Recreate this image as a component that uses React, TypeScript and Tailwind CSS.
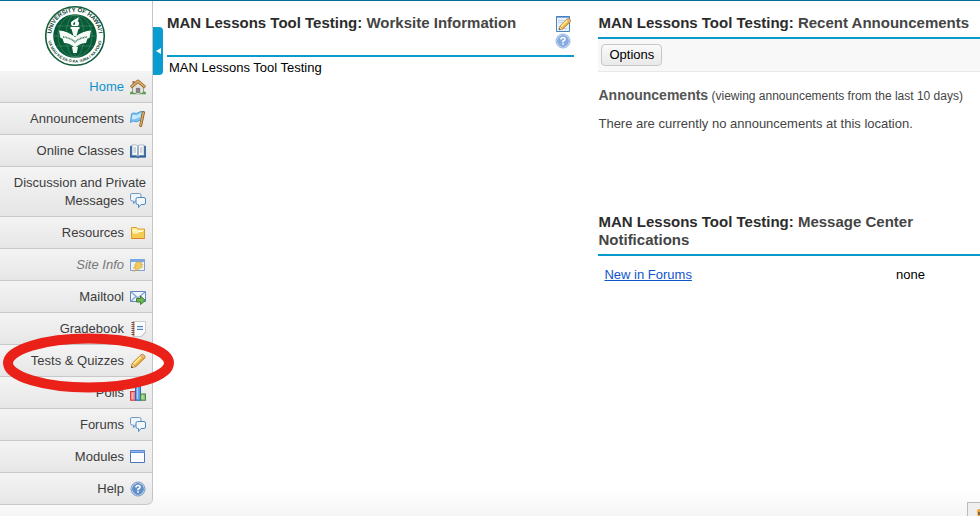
import type { ReactNode } from "react";

function Icon({ children }: { children: ReactNode }) {
  return (
    <svg viewBox="0 0 16 16" aria-hidden="true" className="ml-1.5 inline-block h-4 w-4 align-[-4px]">
      {children}
    </svg>
  );
}

function HomeIcon() {
  return (
    <Icon>
      <path d="M2.5 8 8 3.5 13.5 8v6.5h-11z" fill="#e4e4dc" stroke="#8a8a80" strokeWidth="0.8" />
      <path d="M2.5 2h2.200v4H2.500z" fill="#a9784a" />
      <path d="M.8 8.300 8 2.200l7.200 6.100" fill="none" stroke="#94682f" strokeWidth="3.200" strokeLinejoin="round" />
      <path d="M1.200 7.900 8 2.200l6.800 5.700" fill="none" stroke="#dca867" strokeWidth="1.800" />
      <path d="M6.300 9.300h3.400v5.200H6.300z" fill="#888" stroke="#555" strokeWidth="0.6" />
      <path d="M0 15.300h16v-1.200c-.8-2-3.300-2-4 .2H4c-.7-2.200-3.200-2.200-4-.2z" fill="#58a24c" />
      <path d="M6 14h4v1.500H6z" fill="#ccc" />
    </Icon>
  );
}

function FlagIcon() {
  return (
    <Icon>
      <path d="M1.500 2.800C4 .8 5.500 3.500 8 1.800s3.500-1.400 5-1L11 9.500C8.500 9 7.500 11.500 5 10.600S2.500 10.500.5 11.500z" fill="#7dc4f5" stroke="#4496d6" strokeWidth="0.9" />
      <path d="M2.500 4c2-1 3 .8 5 0L11 2l-.8 4.500C7 6 6 9 1.800 8.200z" fill="#c8e8fc" />
      <path d="m13.500 1.500-2.800 13" stroke="#8f5b20" strokeWidth="3" strokeLinecap="round" />
      <path d="m13.400 1.500-2.800 12.900" stroke="#dfa960" strokeWidth="1.500" strokeLinecap="round" />
    </Icon>
  );
}

function BookIcon() {
  return (
    <Icon>
      <path d="M.3 3.200h15.400v11H9.500L8 15l-1.500-.8H.3z" fill="#2b65a5" stroke="#17457e" strokeWidth="0.6" />
      <path d="M2 2.200c2.500-.8 4.800-.3 6 1 1.200-1.300 3.500-1.800 6-1v10.300c-2.500-.6-4.800-.2-6 1-1.200-1.200-3.500-1.600-6-1z" fill="#f8fbfd" stroke="#7d92a8" strokeWidth="0.6" />
      <path d="M8 3.200v10.300" stroke="#6b7f96" strokeWidth="1.200" />
      <path d="M3.500 5H6M3.500 7H6M3.500 9H6M10 5h2.500M10 7h2.500M10 9h2.500" stroke="#9aa4af" strokeWidth="0.9" />
    </Icon>
  );
}

function ChatIcon() {
  return (
    <Icon>
      <path d="M2 .5h7.500Q11 .5 11 2v4.500Q11 8 9.500 8H5l-1.500 3V8H2Q.5 8 .5 6.500V2Q.5.5 2 .5z" fill="#edf4fa" stroke="#7799bd" />
      <path d="M7.500 4.500H14q1.500 0 1.500 1.500v4q0 1.500-1.500 1.500h-3l-2.500 3v-3h-1Q6 11.500 6 10V6q0-1.500 1.500-1.500z" fill="#f1f8fd" stroke="#4e89bf" />
    </Icon>
  );
}

function FolderIcon() {
  return (
    <Icon>
      <path d="M1.500 2.500h5l1 1.500h7v9.500h-13z" fill="#fff0a0" stroke="#d99a2b" />
      <path d="M2 7.500h5L8 6h6v7H2z" fill="#f6cb51" />
      <path d="M3 5.500h4M3 8h4.500l1-1.500H13" fill="none" stroke="#fffbe0" strokeWidth="1.200" />
      <path d="M1.500 13.500h13" stroke="#db8525" />
    </Icon>
  );
}

function SiteInfoIcon() {
  return (
    <Icon>
      <path d="M.5 2.500h14v11H.5z" fill="#edf3fb" stroke="#829fc9" />
      <path d="M.5 2h14v3H.5z" fill="#7ea6df" />
      <path d="m6 5.500 6-.5-1 2.500h2L10.500 10h2L4 14.500 6 11H3L6.500 8.500H4.500z" fill="#f2cb5e" stroke="#d6a63e" strokeWidth="0.6" />
    </Icon>
  );
}

function MailIcon() {
  return (
    <Icon>
      <path d="M.5 2.500h15v10H.5z" fill="#f1f6fd" stroke="#6286bd" />
      <path d="m1 12 5.500-5M15 12 9.500 7M1 3l7 6 7-6" fill="none" stroke="#7f9fd0" strokeWidth="1.100" />
      <path d="M6.500 9.500h4V7l5 4.500-5 4V13h-4z" fill="#70b553" stroke="#35772b" strokeWidth="0.9" />
    </Icon>
  );
}

function GradebookIcon() {
  return (
    <Icon>
      <path d="M4 .5h11.500v11l-4 4H4z" fill="#fafbfc" stroke="#c9ced4" />
      <path d="M11.500 15.500 15.500 11" stroke="#aeb8c3" />
      <path d="M3.500.5v15" stroke="#c08468" strokeWidth="1.500" />
      <path d="M1.500 1.500h2.800M1.500 3.500h2.800M1.500 5.500h2.800M1.500 7.500h2.800M1.500 9.500h2.800M1.500 11.500h2.800M1.500 13.500h2.800" stroke="#7b5144" />
      <path d="M7 5.500h6M7 8.500h6" stroke="#4b83cc" />
      <path d="M7 6.500h6v1H7z" fill="#b6cdec" />
    </Icon>
  );
}

function PencilShape() {
  return (
    <>
      <path d="m1.500 14.500 1-4.500L11 1.800q1.500-1 3 .4t.7 3L6 13.500z" fill="#f5c451" stroke="#b57a24" strokeWidth="0.9" />
      <path d="m3.500 11 8-7.700" stroke="#fff0a3" strokeWidth="1.500" />
      <path d="m5.500 12.500 7.700-7.300" stroke="#d99735" />
      <path d="m10.500 2.500 3.200 3.300 1-1q.8-1.200-.7-2.700t-2.700-.4z" fill="#f0b69a" stroke="#b57a24" strokeWidth="0.5" />
      <path d="m1.500 14.500.8-4 3.400 3z" fill="#fae5c2" stroke="#b57a24" strokeWidth="0.6" />
      <path d="m1 15 .6-2.200 1.600 1.600z" fill="#5d4123" />
    </>
  );
}

function PencilIcon() {
  return (
    <Icon>
      <PencilShape />
    </Icon>
  );
}

function PollsIcon() {
  return (
    <Icon>
      <path d="M.6 6.500h4.800v8.800H.6z" fill="#ff8b8b" stroke="#d43a3e" strokeWidth="1.100" />
      <path d="M5.600.6h4.800v14.700H5.600z" fill="#69a6f5" stroke="#2860b8" strokeWidth="1.100" />
      <path d="M10.600 9h4.800v6.300h-4.800z" fill="#98cd83" stroke="#3f8641" strokeWidth="1.100" />
      <path d="M2.300 8v6M7.300 2v12M12.300 10.500V14" stroke="#fff" strokeOpacity="0.5" />
    </Icon>
  );
}

function WindowIcon() {
  return (
    <Icon>
      <path d="M.5 2h14v11.500H.5z" fill="#fafcff" stroke="#4c76b8" />
      <path d="M0 1h15v3H0z" fill="#5c8dd4" />
      <path d="M1 2.500h13" stroke="#8fb5eb" />
    </Icon>
  );
}

function HelpShape({ ring, disc }: { ring: string; disc: string }) {
  return (
    <>
      <circle cx="8" cy="8" r="7" fill="#d3e2f5" stroke={ring} strokeWidth="0.8" />
      <circle cx="8" cy="8" r="5.400" fill={disc} stroke={ring} strokeWidth="0.8" />
      <path d="M5.900 6.500q0-2.100 2.100-2.100t2.100 1.800Q10.100 7.400 8 8v1.400" fill="none" stroke="#fff" strokeWidth="1.500" />
      <path d="M7.200 10.300h1.600v1.500H7.200z" fill="#fff" />
    </>
  );
}

function HelpIcon() {
  return (
    <Icon>
      <HelpShape ring="#5b82b5" disc="#5f90cd" />
    </Icon>
  );
}

function Seal() {
  return (
    <svg viewBox="0 0 62 62" className="h-[62px] w-[62px]" role="img" aria-label="University of Hawaii">
      <defs>
        <path id="seal-top" d="M8.500 38A23.700 23.700 0 1 1 53.500 38" />
        <path id="seal-bottom" d="M4.600 37A27.200 27.200 0 0 0 57.400 37" />
      </defs>
      <circle cx="31" cy="31" r="29.300" fill="#fff" stroke="#125c3c" strokeWidth="1.600" />
      <circle cx="31" cy="31" r="21.800" fill="#075b37" />
      <g fill="none" stroke="#5b967b" strokeWidth="0.5">
        <ellipse cx="31" cy="31" rx="9" ry="21" />
        <ellipse cx="31" cy="31" rx="17" ry="21" />
        <path d="M31 10v42M10 31h42M13 21h36M13 41h36" />
      </g>
      <text fill="#0c4630" className="font-['Liberation_Sans',Arial,sans-serif] text-[6px] font-bold">
        <textPath href="#seal-top" startOffset="50%" textAnchor="middle">UNIVERSITY OF HAWAI‘I</textPath>
      </text>
      <text fill="#0c4630" className="font-['Liberation_Sans',Arial,sans-serif] text-[4px] font-bold">
        <textPath href="#seal-bottom" startOffset="50%" textAnchor="middle">UA MAU KE EA O KA ‘AINA I KA PONO</textPath>
      </text>
      <path d="M15 25.500q8 0 16 6.500 8-6.500 16-6.500l-1.500 7.500-2 .5-1.500 4.500Q36 38 31 43q-5-5-11-5l-1.500-4.500-2-.5z" fill="#f4faf6" />
      <path d="M19 32q7 .5 12 5 5-4.500 12-5" fill="none" stroke="#39765a" strokeWidth="1.500" strokeDasharray="1 .6" />
      <path d="M21 26q6 0 10 5 4-5 10-5" fill="none" stroke="#075b37" strokeWidth="0.8" />
      <path d="M28 42h6l-1.200 6h-3.600zM27.500 24h7l-2 7h-3z" fill="#f4faf6" />
      <path d="M26.500 22h9v2h-9z" fill="#fff" />
      <path d="M28 21q-3-4 2-6 3-1.500 4.500-3 .5 3-1 4 3 2 .5 5z" fill="#fff" />
      <path d="M29.500 20q-1-2 1.500-3.200.5 2-.5 3.200z" fill="#075b37" />
    </svg>
  );
}

const tools = [
  { name: "Home", icon: HomeIcon, color: "text-[#0f93cf]" },
  { name: "Announcements", icon: FlagIcon },
  { name: "Online Classes", icon: BookIcon },
  { name: "Discussion and Private Messages", icon: ChatIcon },
  { name: "Resources", icon: FolderIcon },
  { name: "Site Info", icon: SiteInfoIcon, color: "text-[#777] italic" },
  { name: "Mailtool", icon: MailIcon },
  { name: "Gradebook", icon: GradebookIcon },
  { name: "Tests & Quizzes", icon: PencilIcon, circled: true },
  { name: "Polls", icon: PollsIcon },
  { name: "Forums", icon: ChatIcon },
  { name: "Modules", icon: WindowIcon },
  { name: "Help", icon: HelpIcon },
];

function Sidebar() {
  return (
    <aside className="w-[153px] shrink-0 self-start rounded-br-md border-r border-[#c4c4c4]">
      <div className="flex h-[70px] justify-center pt-1 pr-0.5">
        <Seal />
      </div>
      <nav aria-label="Site tools">
        <ul>
          {tools.map(({ name, icon: ToolIcon, color, circled }) => (
            <li
              key={name}
              className="relative border-b border-[#c8c8c8] bg-linear-to-b from-[#f4f4f4] to-[#e6e6e6] last:rounded-br-md"
            >
              <a href="#" className={`block pt-[7px] pr-1.5 pb-1.5 pl-2 text-right leading-[18px] ${color ?? "text-[#3c3c3c]"}`}>
                {name}
                <ToolIcon />
              </a>
              {circled && (
                <svg
                  viewBox="0 0 172 60"
                  aria-hidden="true"
                  className="pointer-events-none absolute -top-3 left-0.5 z-10 h-[60px] w-[172px] max-w-none"
                >
                  <ellipse cx="86.500" cy="30" rx="80.500" ry="24.500" fill="none" stroke="#e92118" strokeWidth="10" />
                </svg>
              )}
            </li>
          ))}
        </ul>
      </nav>
    </aside>
  );
}

function PortletTitle({ site, tool }: { site: string; tool: string }) {
  return (
    <h2 className="text-[15px] leading-[18px] font-bold text-[#2c2c2c]">
      {site}: <span className="text-[#454545]">{tool}</span>
    </h2>
  );
}

const site = "MAN Lessons Tool Testing";

export default function App() {
  return (
    <div className="relative flex min-h-screen overflow-hidden border-t border-[#006e94] bg-white bg-linear-to-t from-[#f5f5f5] to-white to-[28px] font-['Liberation_Sans',Arial,sans-serif] text-[13px] leading-[18px] text-black">
      <Sidebar />
      <button
        type="button"
        aria-label="Collapse tool list"
        className="mt-[26px] flex h-12 w-2.5 shrink-0 items-center justify-center rounded-r bg-[#0a9bd0]"
      >
        <svg viewBox="0 0 5 6" className="h-1.5 w-[5px]" aria-hidden="true">
          <path d="M5 0v6L0 3z" fill="#fff" />
        </svg>
      </button>
      <main className="ml-1 grid min-w-0 flex-1 grid-cols-[408fr_382fr] items-start gap-x-6">
        <section>
          <header className="flex h-14 justify-between border-b-2 border-[#089aca] pt-[13px]">
            <PortletTitle site={site} tool="Worksite Information" />
            <div className="mr-[3px] flex flex-col items-center gap-px pt-0.5">
              <button type="button" aria-label="Edit">
                <svg viewBox="0 0 16 16" className="block h-4 w-4" aria-hidden="true">
                  <path d="M1.500.5h13v15h-13z" fill="#e9f2fc" stroke="#4b80bd" />
                  <path d="M3 4.500h7M3 6.500h5M3 12.500h9" stroke="#bdd3ea" />
                  <path d="M2 1.500h12" stroke="#83aede" />
                  <g transform="translate(3 1.500) scale(.84)">
                    <PencilShape />
                  </g>
                </svg>
              </button>
              <button type="button" aria-label="Help">
                <svg viewBox="0 0 16 16" className="block h-4 w-4" aria-hidden="true">
                  <HelpShape ring="#7fa5dc" disc="#86abe2" />
                </svg>
              </button>
            </div>
          </header>
          <p className="px-0.5 pt-0.5">{site}</p>
        </section>

        <div className="min-w-0">
          <section className="h-[199px]">
            <header className="border-b-2 border-[#089aca] pt-[13px] pb-[5px] whitespace-nowrap">
              <PortletTitle site={site} tool="Recent Announcements" />
            </header>
            <div className="border-b border-[#e9e9e9] bg-[#f8f8f8] px-[3px] py-[5px]">
              <button
                type="button"
                className="block rounded border border-[#c7c7c7] bg-linear-to-b from-[#fafafa] to-[#e9e9e9] px-[7px] py-px"
              >
                Options
              </button>
            </div>
            <div className="pt-3.5 text-[#444]">
              <p className="text-xs leading-[18px] whitespace-nowrap">
                <strong className="text-sm leading-[18px] text-[#555]">Announcements</strong> (viewing announcements from the last 10 days)
              </p>
              <p className="pt-2.5">There are currently no announcements at this location.</p>
            </div>
          </section>

          <section>
            <header className="border-b-2 border-[#089aca] pt-[13px] pb-[5px]">
              <PortletTitle site={site} tool="Message Center Notifications" />
            </header>
            <table className="mt-2.5 w-full text-left">
              <tbody>
                <tr>
                  <th scope="row" className="w-[78%] pl-1.5 font-normal">
                    <a href="#" className="text-[#1155cc] underline">New in Forums</a>
                  </th>
                  <td>none</td>
                </tr>
              </tbody>
            </table>
          </section>
        </div>
      </main>
      <button
        type="button"
        aria-label="Edit page"
        className="absolute right-0 bottom-0 h-3.5 w-[13px] overflow-hidden border-t border-l border-[#bbb] bg-[#efefef] pt-1.5 pl-[9px]"
      >
        <svg viewBox="0 0 8 8" className="h-2 w-2 max-w-none" aria-hidden="true">
          <path d="M0 2q0-2 3-2h5v8H1z" fill="#e9a735" />
          <path d="M1 3h3v3H1z" fill="#8a6240" />
        </svg>
      </button>
    </div>
  );
}
